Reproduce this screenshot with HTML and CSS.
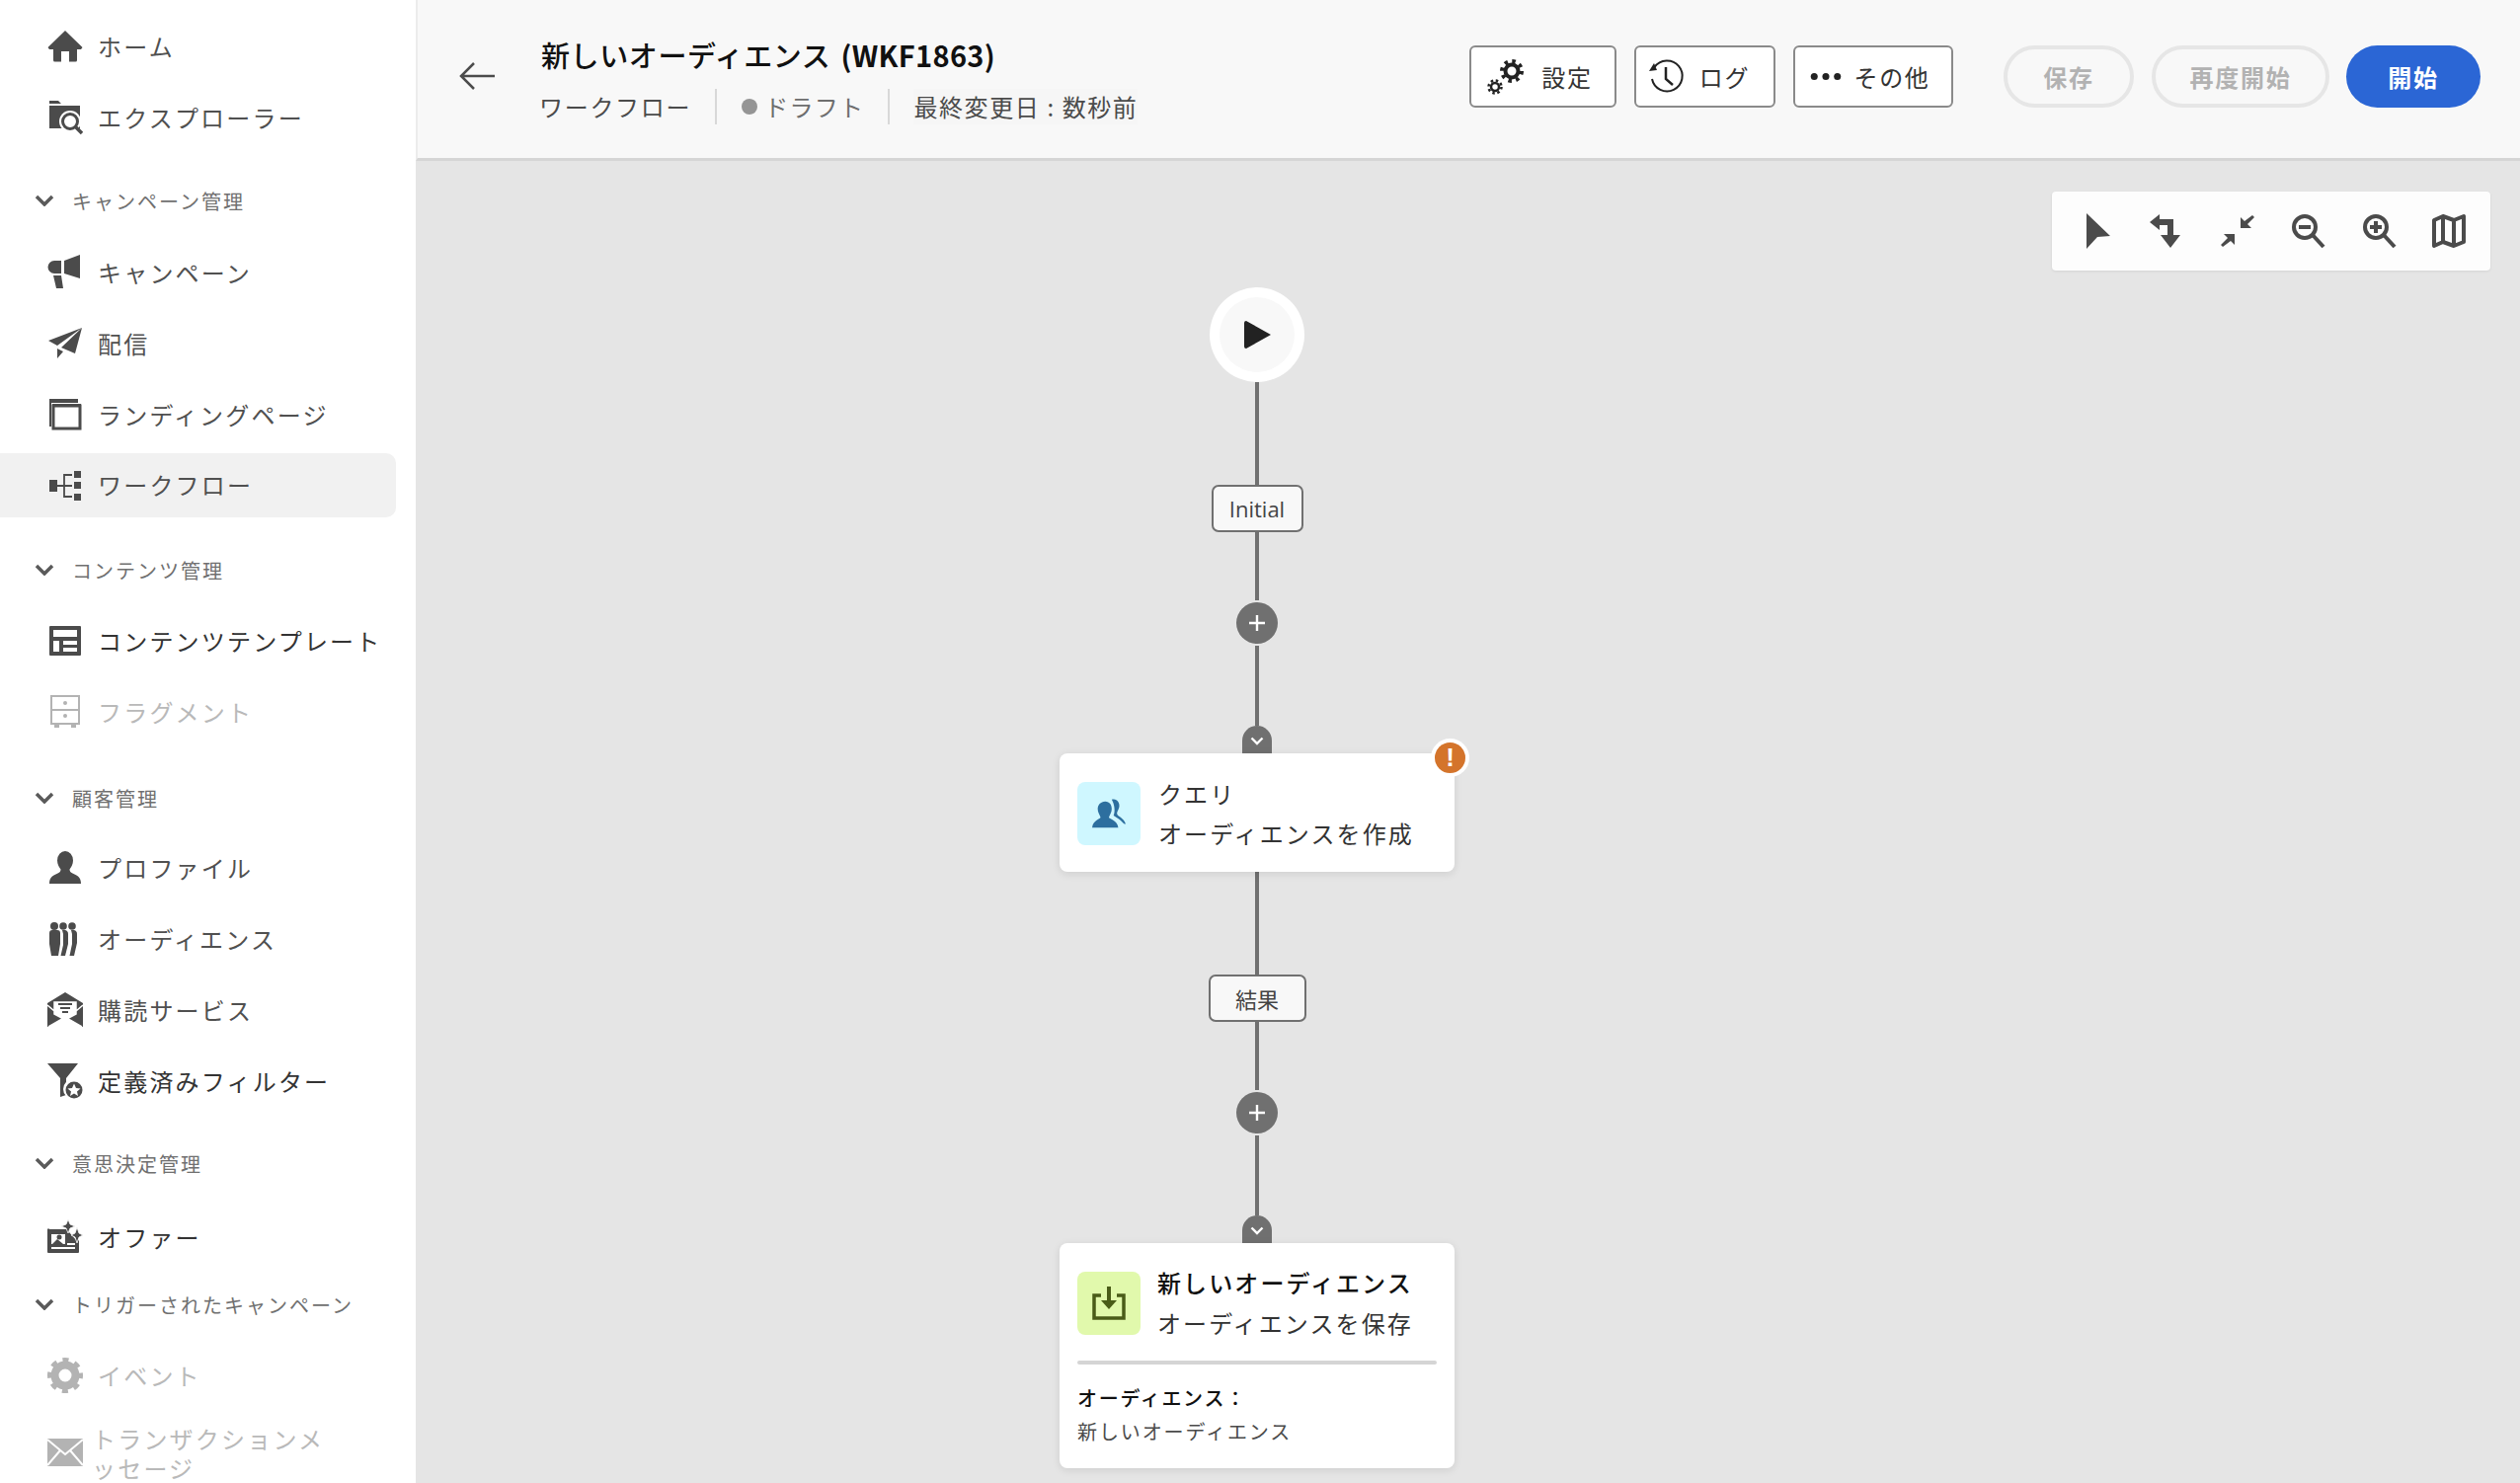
FILE: index.html
```html
<!DOCTYPE html>
<html lang="ja">
<head>
    <meta charset="UTF-8">
    <title>新しいオーディエンス (WKF1863)</title>
    <link rel="stylesheet" href="styles.css">
</head>
<body>
    <aside class="sidebar">
        <a class="nav-item">
            <svg class="icon" viewBox="0 0 36 36"><path d="M18 2 L0.5 19 L2 21 H6 V32 a1.5 1.5 0 0 0 1.5 1.5 H14 V23 H22 V33.5 H28.500 A1.500 1.500 0 0 0 30 32 V21 H34 L35.500 19z"/></svg>
            <span>ホーム</span>
        </a>
        <a class="nav-item">
            <svg class="icon" viewBox="0 0 36 36"><path d="M2 1 H11 L14 4 H2z M2 6 H33 V29 H2z"/><circle cx="23" cy="22" r="11" fill="#fff"/><circle cx="23" cy="22" r="7.500" fill="#fff" stroke="#4b4b4b" stroke-width="3"/><path d="M28 27 L35 34" stroke="#4b4b4b" stroke-width="3.500"/></svg>
            <span>エクスプローラー</span>
        </a>

        <div class="nav-section sec-campaign">
            <svg class="chevron" viewBox="0 0 20 12"><path d="M2 2 L10 10 L18 2" /></svg>
            <span>キャンペーン管理</span>
        </div>
        <a class="nav-item">
            <svg class="icon" viewBox="0 0 36 36"><path d="M33 0 V24 L17 19 V6z M14 6 V19 H7 A6.500 6.500 0 0 1 7 6z M6 21 H14 L16 34 H9z"/></svg>
            <span>キャンペーン</span>
        </a>
        <a class="nav-item">
            <svg class="icon" viewBox="0 0 36 36"><path d="M35 2 L1 15 L10 20z M35 2 L14 22 L28 28z M10 23 V33 L16 26z"/></svg>
            <span>配信</span>
        </a>
        <a class="nav-item">
            <svg class="icon" viewBox="0 0 36 36"><path d="M2 2 H31 V6 H4 V30 H2z"/><rect x="6" y="9" width="27" height="23" fill="none" stroke="#4b4b4b" stroke-width="3"/><rect x="5" y="7" width="29" height="3" /></svg>
            <span>ランディングページ</span>
        </a>
        <a class="nav-item selected">
            <svg class="icon" viewBox="0 0 36 36"><rect x="2" y="12" width="8" height="12"/><rect x="27" y="3" width="7" height="7"/><rect x="27" y="14" width="7" height="7"/><rect x="27" y="26" width="7" height="7"/><path d="M10 18 H25 M17 18 V7 H25 M17 18 V29 H25" fill="none" stroke="#4b4b4b" stroke-width="1.800"/></svg>
            <span>ワークフロー</span>
        </a>

        <div class="nav-section sec-content">
            <svg class="chevron" viewBox="0 0 20 12"><path d="M2 2 L10 10 L18 2" /></svg>
            <span>コンテンツ管理</span>
        </div>
        <a class="nav-item dark">
            <svg class="icon" viewBox="0 0 36 36"><path fill-rule="evenodd" d="M3 3 H33 a1 1 0 0 1 1 1 V32 a1 1 0 0 1-1 1 H3 a1 1 0 0 1-1-1 V4 a1 1 0 0 1 1-1z M6 7 V14 H30 V7z M6 18 V29 H12 V18z M16 18 V22 H30 V18z M16 25 V29 H30 V25z"/></svg>
            <span>コンテンツテンプレート</span>
        </a>
        <a class="nav-item disabled">
            <svg class="icon" viewBox="0 0 36 36"><path fill="none" stroke="#b3b3b3" stroke-width="2" d="M4 2 H32 V30 H4z M4 16 H32"/><circle cx="18" cy="9" r="2"/><circle cx="18" cy="22" r="2"/><rect x="7" y="30" width="5" height="4"/><rect x="24" y="30" width="5" height="4"/></svg>
            <span>フラグメント</span>
        </a>

        <div class="nav-section sec-customer">
            <svg class="chevron" viewBox="0 0 20 12"><path d="M2 2 L10 10 L18 2" /></svg>
            <span>顧客管理</span>
        </div>
        <a class="nav-item">
            <svg class="icon" viewBox="0 0 36 36"><path d="M18 1 a8 9.500 0 0 1 8 9.500 c0 4-2 7-3.500 9 c0 2 1 3 3 4 c4 2 8.500 3 8.500 10.500 H2 c0-7.500 4.500-8.500 8.500-10.500 c2-1 3-2 3-4 C12 17.500 10 14.500 10 10.500 a8 9.500 0 0 1 8-9.500z"/></svg>
            <span>プロファイル</span>
        </a>
        <a class="nav-item">
            <svg class="icon" viewBox="0 0 36 36"><circle cx="7" cy="5" r="4"/><circle cx="16" cy="5" r="3.800"/><circle cx="25" cy="5" r="3.800"/><path d="M2 12 a3 3 0 0 1 3-3 H10 a3 3 0 0 1 3 3 V23 L11 35 H4 L2 23z M15 9 H18 a4 4 0 0 1 3 4 V23 L18 35 H13.500 L16 24 V13z M24 9 H27 a4 4 0 0 1 3 4 V22 L27 35 H22.500 L25 23 V13z"/></svg>
            <span>オーディエンス</span>
        </a>
        <a class="nav-item">
            <svg class="icon" viewBox="0 0 36 36"><path d="M18 0 L0 11 V35 H36 V11z"/><path d="M7 10 H29 V22 L18 28 L7 22z M0 13 L13 24 M36 13 L23 24 M1 35 L18 25 L35 35" fill="#fff" stroke="#fff" stroke-width="1.500"/><path d="M11 12 H25 M13 16 H23 M15 20 H21" stroke="#4b4b4b" stroke-width="2"/></svg>
            <span>購読サービス</span>
        </a>
        <a class="nav-item dark">
            <svg class="icon" viewBox="0 0 36 36"><path d="M0 0 H31 L19 15 V32 L13 34 V15z"/><circle cx="26" cy="26" r="10" fill="#fff"/><circle cx="27" cy="27" r="8.500"/><path fill="#fff" d="M27 20.500 L29 25 L33.500 25.500 L30 28.500 L31 33 L27 30.500 L23 33 L24 28.500 L20.500 25.500 L25 25z"/></svg>
            <span>定義済みフィルター</span>
        </a>

        <div class="nav-section sec-decision">
            <svg class="chevron" viewBox="0 0 20 12"><path d="M2 2 L10 10 L18 2" /></svg>
            <span>意思決定管理</span>
        </div>
        <a class="nav-item dark">
            <svg class="icon" viewBox="0 0 36 36"><path d="M2 10 H22 V13 L30 22 L32 21 V33 a1 1 0 0 1-1 1 H1 a1 1 0 0 1-1-1 V11 a1 1 0 0 1 2-1z"/><path fill="#fff" d="M4 15 H18 V25 H4z"/><circle cx="12" cy="18" r="2.500"/><path d="M5 25 L10 20 L16 25z"/><path d="M4 28 H28 V30 H4z M20 24 H28 V26 H20z" fill="#fff"/><path fill="#4b4b4b" stroke="#fff" stroke-width=".8" d="M21 0 L23 5 L28 7 L23 9 L21 14 L19 9 L14 7 L19 5z M30 8 L32 14 L36 16 L32 18 L30 24 L28 18 L24 16 L28 14z"/></svg>
            <span>オファー</span>
        </a>

        <div class="nav-section sec-trigger">
            <svg class="chevron" viewBox="0 0 20 12"><path d="M2 2 L10 10 L18 2" /></svg>
            <span>トリガーされたキャンペーン</span>
        </div>
        <a class="nav-item disabled">
            <svg class="icon" viewBox="0 0 36 36"><circle cx="18" cy="18" r="10.500" fill="none" stroke="#b3b3b3" stroke-width="8"/><circle cx="18" cy="18" r="15.500" fill="none" stroke="#b3b3b3" stroke-width="5" stroke-dasharray="6 6.170" stroke-dashoffset="3"/></svg>
            <span>イベント</span>
        </a>
        <a class="nav-item disabled two-lines">
            <svg class="icon" viewBox="0 0 36 36"><path d="M0 4 H36 V32 H0z"/><path d="M0 5 L18 20 L36 5 M0 31 L13 16 M36 31 L23 16" fill="none" stroke="#fff" stroke-width="2"/></svg>
            <span>トランザクションメ<br>ッセージ</span>
        </a>
    </aside>

    <main class="main">
        <header class="topbar">
            <button class="back" aria-label="戻る">
                <svg viewBox="0 0 38 30"><path d="M36 15 H3 M15 2 L2 15 L15 28" fill="none" stroke="#4b4b4b" stroke-width="2.500"/></svg>
            </button>
            <div class="heading">
                <h1>新しいオーディエンス <span class="code">(WKF1863)</span></h1>
                <div class="meta">
                    <span class="meta-type">ワークフロー</span>
                    <i class="sep"></i>
                    <span class="meta-status"><b class="dot"></b>ドラフト</span>
                    <i class="sep"></i>
                    <span class="meta-date">最終変更日 : 数秒前</span>
                </div>
            </div>
            <div class="actions">
                <button class="btn btn-settings">
                    <svg viewBox="0 0 38 38"><circle cx="25" cy="13" r="6.500" fill="none" stroke="#222" stroke-width="4"/><circle cx="25" cy="13" r="10" fill="none" stroke="#222" stroke-width="4" stroke-dasharray="3.500 4.350"/><circle cx="8" cy="29" r="4" fill="none" stroke="#222" stroke-width="2.500"/><circle cx="8" cy="29" r="6.500" fill="none" stroke="#222" stroke-width="2.500" stroke-dasharray="2.500 2.600"/></svg>
                    <span>設定</span>
                </button>
                <button class="btn btn-log">
                    <svg viewBox="0 0 38 38"><path d="M6.500 9 A15.500 15.500 0 1 1 4 21" fill="none" stroke="#222" stroke-width="2"/><path d="M1 13 L9 12 L6 5z" fill="#222"/><path d="M18 9 V21 L25 27" fill="none" stroke="#222" stroke-width="2.500"/></svg>
                    <span>ログ</span>
                </button>
                <button class="btn btn-more">
                    <svg class="dots" viewBox="0 0 30 8"><circle cx="4" cy="4" r="3.300" fill="#222"/><circle cx="15" cy="4" r="3.300" fill="#222"/><circle cx="26" cy="4" r="3.300" fill="#222"/></svg>
                    <span>その他</span>
                </button>
                <button class="pill pill-save" disabled>保存</button>
                <button class="pill pill-restart" disabled>再度開始</button>
                <button class="pill pill-start">開始</button>
            </div>
        </header>

        <section class="canvas">
            <div class="toolbar">
                <svg viewBox="0 0 36 36"><path d="M8 0 L32 23 L19 24 L8 36z"/></svg>
                <svg viewBox="0 0 36 36"><path d="M1 9 L11 1 V6 H25 V22 H32 L22 35 L12 22 H19 V12 H11 V17z"/></svg>
                <svg viewBox="0 0 36 36"><path d="M33 2 L35 4 L28 11 L32 15 H21 V4 L25 8z M3 34 L1 32 L8 25 L4 21 H15 V32 L11 28z"/></svg>
                <svg viewBox="0 0 36 36"><circle cx="15" cy="14" r="11" fill="none" stroke="#4b4b4b" stroke-width="4"/><path d="M23 22 L34 34" stroke="#4b4b4b" stroke-width="4"/><path d="M9 12 H21 V16 H9z"/></svg>
                <svg viewBox="0 0 36 36"><circle cx="15" cy="14" r="11" fill="none" stroke="#4b4b4b" stroke-width="4"/><path d="M23 22 L34 34" stroke="#4b4b4b" stroke-width="4"/><path d="M9 12 H13 V8 H17 V12 H21 V16 H17 V20 H13 V16 H9z"/></svg>
                <svg viewBox="0 0 36 36"><path d="M3 7 L12 3 L23 7 L33 3 V29 L23 33 L12 29 L3 33z M12 3 V29 M23 7 V33" fill="none" stroke="#4b4b4b" stroke-width="4" stroke-linejoin="round"/></svg>
            </div>

            <div class="flow">
                <div class="start">
                    <div class="start-inner">
                        <svg viewBox="0 0 28 28"><path d="M1 2 a2 2 0 0 1 2-2 L28 14 L3 28 a2 2 0 0 1-2-2z" fill="#222"/></svg>
                    </div>
                </div>
                <div class="line h104"></div>
                <div class="edge-label edge-initial">Initial</div>
                <div class="line h69"></div>
                <div class="add"><svg viewBox="0 0 16 16"><path d="M8 0 V16 M0 8 H16" stroke="#fff" stroke-width="2.400"/></svg></div>
                <div class="line h81"></div>
                <div class="tab"><svg viewBox="0 0 14 9"><path d="M1.500 1.500 L7 7 L12.500 1.500" fill="none" stroke="#fff" stroke-width="2.400"/></svg></div>

                <div class="node node-query">
                    <div class="node-head">
                        <div class="node-icon blue">
                            <svg viewBox="0 0 36 36"><path d="M21 3 c5-2 9 3 8 8 c-1 4-3 5-2 8 c1 2 7 4 9 10 c-2 1-4-3-7-5 L23 20 c2-4 1-12-2-17z" fill="#2d6f9f"/><path d="M14 5 c5 0 7 4 7 8 c0 4-2 6-3 9 c0 2 9 3 10 11 H0 c1-8 9-9 9-11 c-1-3-3-5-3-9 c0-4 3-8 8-8z" fill="#2d6f9f"/></svg>
                        </div>
                        <div class="node-text">
                            <div class="node-title">クエリ</div>
                            <div class="node-sub">オーディエンスを作成</div>
                        </div>
                    </div>
                    <div class="badge"><span>!</span></div>
                </div>

                <div class="line h104"></div>
                <div class="edge-label edge-result">結果</div>
                <div class="line h69"></div>
                <div class="add"><svg viewBox="0 0 16 16"><path d="M8 0 V16 M0 8 H16" stroke="#fff" stroke-width="2.400"/></svg></div>
                <div class="line h81"></div>
                <div class="tab"><svg viewBox="0 0 14 9"><path d="M1.500 1.500 L7 7 L12.500 1.500" fill="none" stroke="#fff" stroke-width="2.400"/></svg></div>

                <div class="node node-save">
                    <div class="node-head">
                        <div class="node-icon green">
                            <svg viewBox="0 0 34 34"><path d="M9 9 H2 V32 H32 V9 H25" fill="none" stroke="#4a5c18" stroke-width="3.500"/><path d="M15 0 H19 V14 H25 L17 23 L9 14 H15z" fill="#4a5c18"/></svg>
                        </div>
                        <div class="node-text">
                            <div class="node-title strong">新しいオーディエンス</div>
                            <div class="node-sub">オーディエンスを保存</div>
                        </div>
                    </div>
                    <hr class="node-rule">
                    <div class="node-prop">オーディエンス：</div>
                    <div class="node-val">新しいオーディエンス</div>
                </div>
            </div>
        </section>
    </main>
</body>
</html>
```

FILE: styles.css
```css
* {
    box-sizing: border-box;
}
html, body {
    height: 100%;
}
body {
    margin: 0;
    display: flex;
    overflow: hidden;
    background: #fff;
    color: #2c2c2c;
    font-family: "Noto Sans CJK JP", "Noto Sans", sans-serif;
}
button {
    font-family: inherit;
}

/* left nav */
.sidebar {
    width: 421px;
    flex: none;
    padding-top: 11px;
    background: #fff;
}
.nav-item {
    height: 72px;
    display: flex;
    align-items: center;
    padding-left: 48px;
    font-size: 24px;
    letter-spacing: 2.2px;
    color: #505050;
}
.nav-item span {
    margin-left: 15px;
    margin-top: -2px;
}
.nav-item.dark {
    color: #333;
}
.nav-item.selected {
    height: 65px;
    margin-top: 3px;
    margin-bottom: 3px;
    margin-right: 20px;
    background: #f1f1f1;
    border-radius: 0 10px 10px 0;
}
.nav-item.disabled {
    color: #b9b9b9;
}
.nav-item.two-lines {
    line-height: 30px;
    height: 76px;
    margin-top: 4px;
}
.nav-item.two-lines span {
    margin-left: 9px;
    margin-top: 2px;
}
.icon {
    width: 36px;
    height: 36px;
    flex: none;
    fill: #4b4b4b;
}
.disabled .icon {
    fill: #b3b3b3;
}
.nav-section {
    height: 72px;
    margin-top: 15px;
    display: flex;
    align-items: center;
    padding-left: 35px;
    font-size: 20px;
    letter-spacing: 2px;
    color: #707070;
}
.nav-section span {
    margin-left: 18px;
}
.sec-campaign {
    margin-top: 12px;
    margin-bottom: 1px;
}
.sec-content {
    margin-top: 17px;
}
.sec-customer {
    height: 70px;
    margin-top: 16px;
}
.sec-decision {
    margin-top: 11px;
    margin-bottom: 3px;
}
.sec-trigger {
    margin-top: 0;
    height: 64px;
    margin-bottom: 4px;
}
.chevron {
    width: 20px;
    height: 12px;
    flex: none;
    fill: none;
    stroke: #5a5a5a;
    stroke-width: 3.5;
}

/* main */
.main {
    flex: 1;
    display: flex;
    flex-direction: column;
    min-width: 0;
    background: #e5e5e5;
}
.topbar {
    height: 163px;
    flex: none;
    display: flex;
    padding-right: 40px;
    background: #f8f8f8;
    border-bottom: 3px solid #d5d5d5;
    border-left: 2px solid #ececec;
}
.back {
    width: 38px;
    height: 30px;
    margin: 62px 43px 0 42px;
    padding: 0;
    border: none;
    background: none;
}
.back svg {
    display: block;
}
.heading {
    padding-top: 35px;
}
h1 {
    margin: 0 0 0 2px;
    font-size: 29px;
    line-height: 40px;
    font-weight: 500;
    letter-spacing: .6px;
    color: #111;
}
.code {
    margin-left: 3px;
    font-weight: 700;
    letter-spacing: .3px;
}
.meta {
    display: flex;
    align-items: center;
    margin-top: 15px;
    font-size: 24px;
    line-height: 36px;
    color: #4b4b4b;
}
.meta-type {
    letter-spacing: 1.700px;
}
.sep {
    width: 2px;
    height: 36px;
    margin: 0 24px;
    background: #d8d8d8;
}
.meta-status {
    display: flex;
    align-items: center;
    margin-left: 10px;
    color: #6e6e6e;
    letter-spacing: 1.300px;
}
.dot {
    width: 16px;
    height: 16px;
    margin-left: -9px;
    margin-right: 7px;
    border-radius: 50%;
    background: #959595;
}
.meta-date {
    background: #f6f6f6;
    margin-right: 10px;
    letter-spacing: 1.600px;
}
.actions {
    margin-left: auto;
    display: flex;
    align-items: flex-start;
    padding-top: 46px;
}
.btn {
    height: 63px;
    display: flex;
    align-items: center;
    justify-content: center;
    margin-right: 18px;
    padding: 0 6px 0 0;
    background: #fff;
    border: 2px solid #8a8a8a;
    border-radius: 6px;
    font-size: 24px;
    letter-spacing: 1.7px;
    color: #333;
}
.btn svg {
    width: 38px;
    height: 38px;
    margin-right: 14px;
}
.btn svg.dots {
    width: 32px;
    height: 9px;
    margin-right: 12px;
}
.btn-settings { width: 149px; }
.btn-settings svg { margin-right: 17px; }
.btn-log { width: 143px; padding-right: 12px; }
.btn-more { width: 162px; margin-right: 51px; }
.pill {
    height: 63px;
    padding: 0;
    margin-right: 18px;
    border-radius: 32px;
    font-size: 24px;
    font-weight: 700;
    letter-spacing: 1.7px;
}
.pill[disabled] {
    background: none;
    border: 4px solid #e6e6e6;
    color: #b2b2b2;
}
.pill-save { width: 132px; }
.pill-restart { width: 180px; margin-right: 17px; }
.pill-start {
    width: 136px;
    margin-right: 0;
    border: none;
    background: #2b66d5;
    color: #fff;
}

/* canvas */
.canvas {
    flex: 1;
    position: relative;
    padding: 128px 0 0 652px;
}
.toolbar {
    position: absolute;
    top: 31px;
    right: 30px;
    width: 444px;
    height: 80px;
    display: flex;
    align-items: center;
    justify-content: space-between;
    padding: 0 24px 0 27px;
    background: #fdfdfd;
    border-radius: 4px;
    box-shadow: 0 1px 3px rgba(0,0,0,.08);
}
.toolbar svg {
    width: 36px;
    height: 36px;
    fill: #4b4b4b;
}
.flow {
    width: 400px;
    display: flex;
    flex-direction: column;
    align-items: center;
}
.start {
    width: 96px;
    height: 96px;
    padding: 10px;
    border-radius: 50%;
    background: #fff;
}
.start-inner {
    height: 100%;
    display: flex;
    align-items: center;
    justify-content: center;
    border-radius: 50%;
    background: #f8f8f8;
}
.start-inner svg {
    width: 28px;
    height: 28px;
}
.line {
    width: 4px;
    background: #707070;
}
.h104 { height: 104px; }
.h69 { height: 69px; }
.h81 { height: 81px; }
.edge-label {
    height: 48px;
    display: flex;
    align-items: center;
    justify-content: center;
    background: #f8f8f8;
    border: 2px solid #707070;
    border-radius: 7px;
    font-family: "Open Sans", "Noto Sans CJK JP", sans-serif;
    font-size: 22px;
    color: #444;
}
.edge-initial { width: 93px; }
.edge-result {
    width: 99px;
    font-family: "Noto Sans CJK JP", sans-serif;
}
.add {
    width: 42px;
    height: 42px;
    margin: 2px 0;
    display: flex;
    align-items: center;
    justify-content: center;
    border-radius: 50%;
    background: #707070;
}
.add svg {
    width: 16px;
    height: 16px;
}
.tab {
    width: 30px;
    height: 28px;
    display: flex;
    justify-content: center;
    padding-top: 11px;
    border-radius: 15px 15px 0 0;
    background: #707070;
}
.tab svg {
    width: 14px;
    height: 9px;
}
.node {
    width: 400px;
    position: relative;
    padding: 29px 18px 27px;
    background: #fff;
    border-radius: 8px;
    box-shadow: 0 2px 8px rgba(0,0,0,.1);
}
.node-save {
    padding-bottom: 20px;
}
.node-head {
    height: 64px;
    display: flex;
    align-items: center;
}
.node-icon {
    width: 64px;
    height: 64px;
    flex: none;
    display: flex;
    align-items: center;
    justify-content: center;
    border-radius: 8px;
}
.node-icon.blue { background: #cff7ff; }
.node-icon.green { background: #e1f9ac; }
.node-icon svg {
    width: 34px;
    height: 34px;
}
.node-text {
    margin-left: 18px;
    font-size: 24px;
    letter-spacing: 2.100px;
    line-height: 40px;
    color: #333;
}
.node-save .node-text {
    line-height: 41px;
    margin-top: -2px;
    margin-left: 17px;
}
.node-title.strong {
    font-weight: 500;
    color: #111;
}
.badge {
    position: absolute;
    top: -15px;
    right: -15px;
    width: 39px;
    height: 39px;
    padding: 4px;
    border-radius: 50%;
    background: #fff;
}
.badge span {
    display: block;
    height: 31px;
    border-radius: 50%;
    background: #d4742b;
    color: #fff;
    font-family: "Liberation Sans", sans-serif;
    font-size: 26px;
    font-weight: 700;
    line-height: 31px;
    text-align: center;
}
.node-rule {
    height: 4px;
    margin: 26px 0 17px;
    border: none;
    border-radius: 2px;
    background: #d5d5d5;
}
.node-prop {
    font-size: 20px;
    font-weight: 500;
    letter-spacing: 1.7px;
    line-height: 34px;
    color: #111;
}
.node-val {
    font-size: 20px;
    letter-spacing: 1.9px;
    line-height: 34px;
    color: #4b4b4b;
}
```
